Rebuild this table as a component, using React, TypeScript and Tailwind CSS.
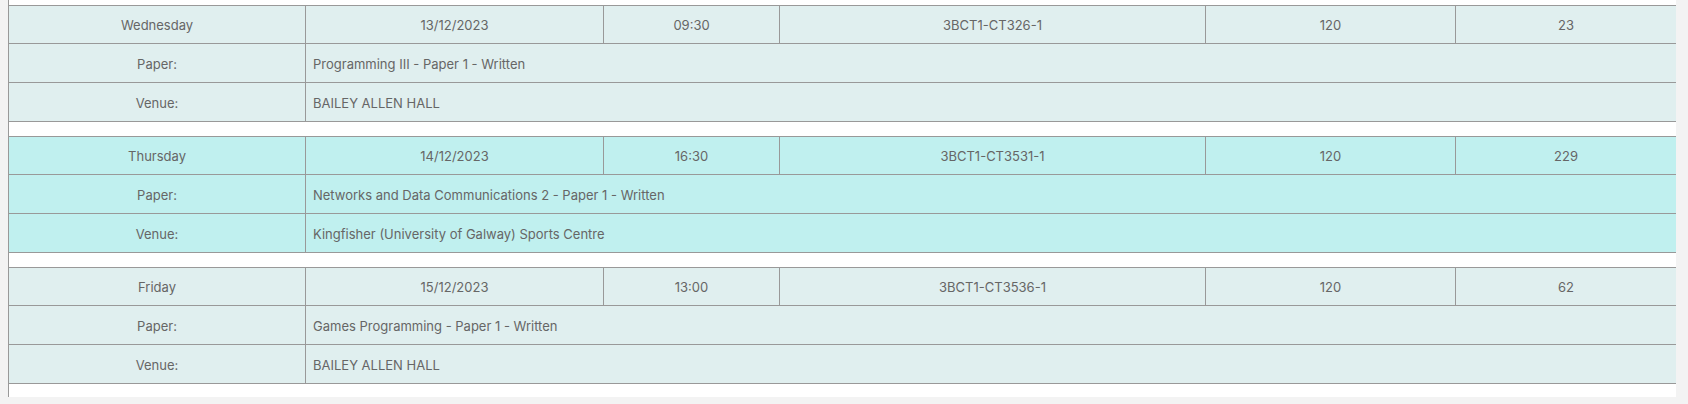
import React from "react";

type Exam = {
  day: string;
  date: string;
  time: string;
  code: string;
  duration: string;
  seats: string;
  paper: string;
  venue: string;
  bg: string;
};

const exams: Exam[] = [
  {
    day: "Wednesday",
    date: "13/12/2023",
    time: "09:30",
    code: "3BCT1-CT326-1",
    duration: "120",
    seats: "23",
    paper: "Programming III - Paper 1 - Written",
    venue: "BAILEY ALLEN HALL",
    bg: "bg-[#e0efef]",
  },
  {
    day: "Thursday",
    date: "14/12/2023",
    time: "16:30",
    code: "3BCT1-CT3531-1",
    duration: "120",
    seats: "229",
    paper: "Networks and Data Communications 2 - Paper 1 - Written",
    venue: "Kingfisher (University of Galway) Sports Centre",
    bg: "bg-[#c0f0ef]",
  },
  {
    day: "Friday",
    date: "15/12/2023",
    time: "13:00",
    code: "3BCT1-CT3536-1",
    duration: "120",
    seats: "62",
    paper: "Games Programming - Paper 1 - Written",
    venue: "BAILEY ALLEN HALL",
    bg: "bg-[#e0efef]",
  },
];

function Group({ e }: { e: Exam }) {
  return (
    <div className="flex flex-col">
      <div className={`flex h-[38px] border-t border-[#999999] ${e.bg}`}>
        <div className="w-[296px] flex items-center justify-center pt-[2px]">{e.day}</div>
        <div className="w-[298px] flex items-center justify-center pt-[2px] border-l border-[#999999]">{e.date}</div>
        <div className="w-[176px] flex items-center justify-center pt-[2px] border-l border-[#999999]">{e.time}</div>
        <div className="w-[426px] flex items-center justify-center pt-[2px] border-l border-[#999999]">{e.code}</div>
        <div className="w-[250px] flex items-center justify-center pt-[2px] border-l border-[#999999]">{e.duration}</div>
        <div className="flex-1 flex items-center justify-center pt-[2px] border-l border-[#999999]">{e.seats}</div>
      </div>
      <div className={`flex h-[39px] border-t border-[#999999] ${e.bg}`}>
        <div className="w-[296px] flex items-center justify-center pt-[3px]">Paper:</div>
        <div className="flex-1 flex items-center pl-[7px] pt-[3px] border-l border-[#999999]">{e.paper}</div>
      </div>
      <div className={`flex h-[39px] border-t border-[#999999] ${e.bg}`}>
        <div className="w-[296px] flex items-center justify-center pt-[3px]">Venue:</div>
        <div className="flex-1 flex items-center pl-[7px] pt-[3px] border-l border-[#999999]">{e.venue}</div>
      </div>
      <div className="h-[15px] border-t border-[#999999] bg-white" />
    </div>
  );
}

export default function App() {
  return (
    <div className="w-[1688px] h-[404px] bg-[#f3f3f3] overflow-hidden">
      <div
        className="ml-[8px] w-[1668px] h-[397px] bg-white border-l border-[#999999] pt-[5px] overflow-hidden text-[13px] text-[#666666]"
        style={{ fontFamily: "Inter, 'Noto Sans', sans-serif" }}
      >
        {exams.map((e) => (
          <Group key={e.day} e={e} />
        ))}
      </div>
    </div>
  );
}
